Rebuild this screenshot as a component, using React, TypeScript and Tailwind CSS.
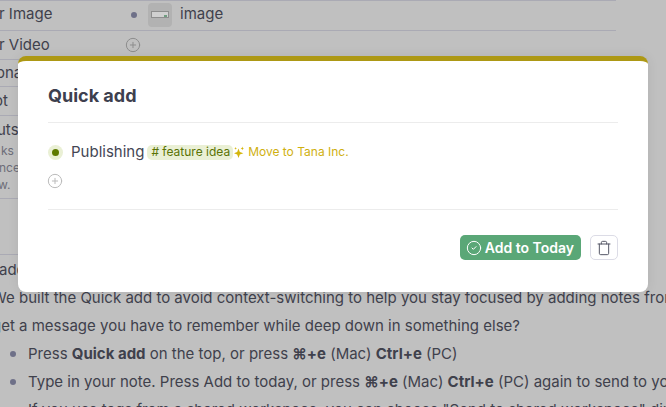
import { CircleCheck, CirclePlus, Trash } from "lucide-react";

const rowLine = "border-b border-[#aaaab4]";

function Sparkle() {
  return (
    <svg viewBox="0 0 10 12" className="ml-[1px] h-3 w-[10px] text-[#d4b50a]" fill="currentColor">
      <path d="M4.5 2.5 L5.8 5.9 L9.4 7.2 L5.8 8.5 L4.5 12 L3.2 8.5 L0 7.2 L3.2 5.9 Z" />
      <path d="M8.3 0.5 L8.8 1.9 L10 2.4 L8.8 2.9 L8.3 4.3 L7.8 2.9 L6.6 2.4 L7.8 1.9 Z" />
      <path d="M1.6 1 L2 2 L3 2.4 L2 2.8 L1.6 3.8 L1.2 2.8 L0.2 2.4 L1.2 2 Z" />
    </svg>
  );
}

export default function App() {
  return (
    <div
      className="relative h-[407px] w-[666px] overflow-hidden bg-[#c0c0c0] text-[15px] text-[#3f414c]"
      style={{ fontFamily: "Inter, sans-serif" }}
    >
      {/* page behind the dialog */}
      <div className="w-[616px]">
        <div className={`flex h-[31px] items-center border-t border-t-[#aaaab4] pb-[2px] ${rowLine}`}>
          <span className="-ml-px w-[128px] shrink-0">r Image</span>
          <span className="mr-[11px] ml-[4px] size-[6px] shrink-0 rounded-full bg-[#6e7088]" />
          <span className="mr-2 flex h-6 w-6 shrink-0 items-center justify-center rounded bg-[#b2b2b2]">
            <span className="relative block h-[7px] w-[18px] border border-[#8d8d8d] bg-[#d0d0d0]">
              <span className="absolute right-[1px] bottom-0 h-[2px] w-[3px] bg-[#6f9c80]" />
            </span>
          </span>
          <span>image</span>
        </div>
        <div className={`flex h-[29px] items-center ${rowLine}`}>
          <span className="-ml-px w-[126px] shrink-0">r Video</span>
          <CirclePlus className="size-4 text-[#8d8d8d]" strokeWidth={1.5} />
        </div>
        <div className={`flex h-[27px] items-center ${rowLine}`}>
          <span className="-ml-[4px]">ona</span>
        </div>
        <div className={`flex h-[29px] items-center ${rowLine}`}>
          <span className="-ml-[6px]">ot</span>
        </div>
        <div className={`flex h-[83px] flex-col pt-[3px] ${rowLine}`}>
          <span className="-ml-[3px]">uts</span>
          <div className="flex flex-col text-[12px] leading-[17px] text-[#6c6d78]">
            <span className="ml-px">ks</span>
            <span className="-ml-px">nce</span>
            <span className="-ml-[2px]">w.</span>
          </div>
        </div>
        <div className={`h-[56px] ${rowLine}`} />
      </div>

      <div className="mt-[1px] whitespace-nowrap leading-7">
        <p className="-ml-[1px]">add</p>
        <p className="-ml-[8px]">We built the Quick add to avoid context-switching to help you stay focused by adding notes from</p>
        <p className="-ml-[8px]">get a message you have to remember while deep down in something else?</p>
        <ul className="pl-[10px]">
          <li className="flex items-center">
            <span className="mr-[12px] size-[6px] shrink-0 rounded-full bg-[#6e7088]" />
            <span>
              Press <b className="font-bold">Quick add</b> on the top, or press <b className="font-bold">⌘+e</b> (Mac) <b className="font-bold">Ctrl+e</b> (PC)
            </span>
          </li>
          <li className="flex items-center">
            <span className="mr-[12px] size-[6px] shrink-0 rounded-full bg-[#6e7088]" />
            <span>
              Type in your note. Press Add to today, or press <b className="font-bold">⌘+e</b> (Mac) <b className="font-bold">Ctrl+e</b> (PC) again to send to your
            </span>
          </li>
          <li className="flex items-center">
            <span className="mr-[12px] size-[6px] shrink-0 rounded-full bg-[#6e7088]" />
            <span>If you use tags from a shared workspace, you can choose "Send to shared workspace" directly</span>
          </li>
        </ul>
      </div>

      {/* quick add dialog */}
      <div className="absolute top-[56px] left-[18px] flex h-[236px] w-[630px] flex-col rounded-lg border-t-[5px] border-[#ad9814] bg-white px-[30px] shadow-[0_0_12px_rgba(0,0,0,0.08)]">
        <h2 className="flex h-[62px] items-center border-b border-[#ececec] pt-[8px] text-lg font-bold text-[#3d404e]">
          Quick add
        </h2>
        <div className="flex h-[87px] flex-col border-b border-[#ececec] pt-[21px]">
          <div className="flex h-4 items-center">
            <span className="flex size-[15px] items-center justify-center rounded-full bg-[#eaf0d5]">
              <span className="size-[7px] rounded-full bg-[#5e7a00]" />
            </span>
            <span className="ml-2 text-[#444654]">Publishing</span>
            <span className="ml-[3px] flex h-[15px] items-center rounded-[5px] bg-[#eaf0d5] pr-[3px] pl-1 text-[12px] text-[#5a7304]">
              # feature idea
            </span>
            <Sparkle />
            <span className="ml-[4px] text-[12px] text-[#cfb010]">Move to Tana Inc.</span>
          </div>
          <CirclePlus className="mt-[13px] -ml-px size-4 text-[#bbbbbb]" strokeWidth={1.5} />
        </div>
        <div className="flex justify-end gap-[9px] pt-[25px]">
          <button className="flex h-[25px] items-center gap-[3px] rounded-[5px] bg-[#5aa777] pr-[7px] pl-[6px] text-[14px] font-semibold text-white">
            <CircleCheck className="size-4" strokeWidth={1.5} />
            Add to Today
          </button>
          <button className="flex h-[25px] w-[28px] items-center justify-center rounded-[5px] border border-[#dcdce6] bg-white text-[#555766]">
            <Trash className="size-4" strokeWidth={1.5} />
          </button>
        </div>
      </div>
    </div>
  );
}
